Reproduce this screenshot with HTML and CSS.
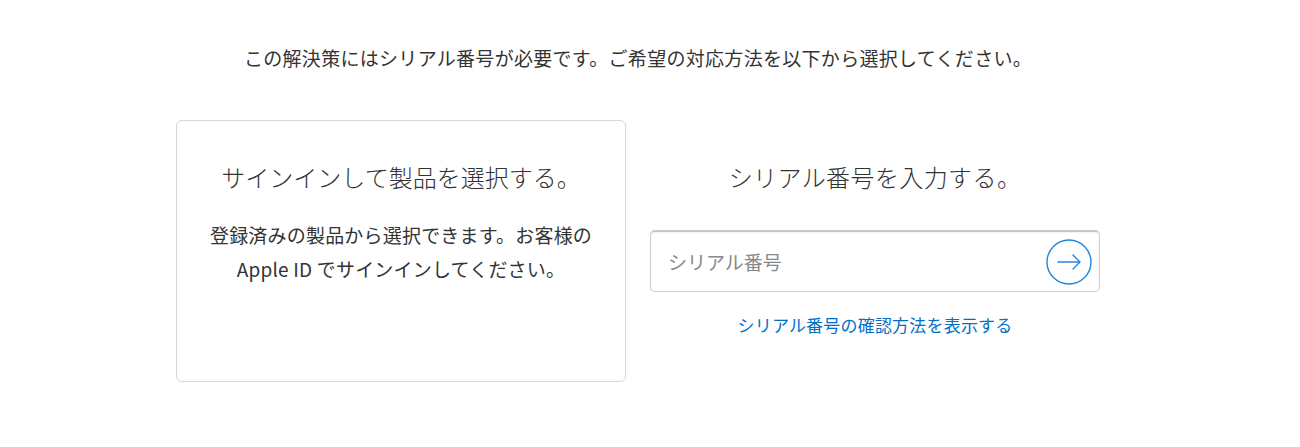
FILE: index.html
```html
<!DOCTYPE html>
<html lang="ja">
<head>
<meta charset="utf-8">
<title>シリアル番号</title>
<link rel="stylesheet" href="styles.css">
</head>
<body>
<main class="page">
  <p class="intro">この解決策にはシリアル番号が必要です。ご希望の対応方法を以下から選択してください。</p>
  <div class="options">
    <section class="card">
      <h2 class="title">サインインして製品を選択する。</h2>
      <p class="desc">登録済みの製品から選択できます。お客様の<br>Apple ID でサインインしてください。</p>
    </section>
    <section class="serial">
      <h2 class="title title-serial">シリアル番号を入力する。</h2>
      <div class="field">
        <span class="placeholder">シリアル番号</span>
        <span class="go" aria-label="送信">
          <svg width="46" height="46" viewBox="0 0 46 46" fill="none" stroke="#1f86e3" stroke-width="1.4" stroke-linecap="round" stroke-linejoin="round">
            <circle cx="23" cy="23" r="22"/>
            <path d="M12 23h22M27 16l7 7-7 7"/>
          </svg>
        </span>
      </div>
      <a class="help" href="#">シリアル番号の確認方法を表示する</a>
    </section>
  </div>
</main>
</body>
</html>
```
FILE: styles.css
```css
* { box-sizing: border-box; }
html, body { margin: 0; padding: 0; background: #fff; }
body {
  font-family: "Noto Sans CJK JP", "Noto Sans", sans-serif;
  color: #333;
  width: 1300px;
  height: 447px;
  overflow: hidden;
}
.page { padding-top: 46px; }
.intro {
  margin: 0;
  text-align: center;
  font-size: 19px;
  line-height: 24px;
  font-weight: 400;
  letter-spacing: 0.3px;
  color: #333;
  padding-right: 24px;
}
.options {
  display: flex;
  justify-content: center;
  gap: 24px;
  margin-top: 50px;
  padding-right: 24px;
}
.card, .serial {
  width: 450px;
}
.card {
  height: 262px;
  border: 1px solid #d6d6d6;
  border-radius: 6px;
  padding-top: 40px;
  text-align: center;
}
.serial {
  padding-top: 41px;
  text-align: center;
  display: flex;
  flex-direction: column;
  align-items: center;
}
.title {
  margin: 0;
  font-size: 24px;
  line-height: 32px;
  font-weight: 300;
  color: #333;
}
.title-serial { letter-spacing: 0.4px; }
.desc {
  margin: 25px 0 0;
  font-size: 19px;
  line-height: 34px;
  font-weight: 400;
  letter-spacing: 0.2px;
  color: #333;
}
.field {
  margin-top: 37px;
  width: 450px;
  height: 62px;
  border: 1px solid #cfcfcf;
  border-top: 2px solid #c8c8c8;
  border-radius: 5px;
  box-shadow: inset 0 1px 2px rgba(0,0,0,0.06);
  display: flex;
  align-items: center;
  justify-content: space-between;
  padding: 0 7px 0 17px;
}
.placeholder {
  font-size: 19px;
  color: #888;
  font-weight: 400;
}
.go { display: flex; }
.help {
  margin-top: 21px;
  font-size: 17px;
  line-height: 24px;
  letter-spacing: 0.2px;
  color: #0070c9;
  text-decoration: none;
}
```
